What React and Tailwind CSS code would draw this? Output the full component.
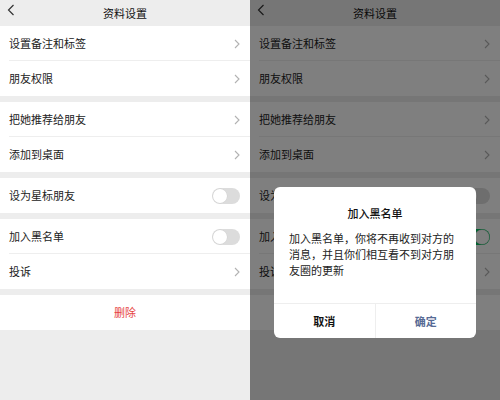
import React from 'react'

const font = { fontFamily: '"Noto Sans CJK SC", "Noto Sans", sans-serif' }

function Chevron() {
  return (
    <svg width="6" height="10" viewBox="0 0 6 10" className="shrink-0">
      <path d="M1 1l4 4-4 4" fill="none" stroke="#b2b2b2" strokeWidth="1.1" />
    </svg>
  )
}

function Toggle({ on }) {
  return (
    <div
      className={`w-[28px] h-[16px] rounded-full flex items-center p-[1px] ${
        on ? 'bg-[#07c160] justify-end' : 'bg-[#dcdcdc] justify-start'
      }`}
    >
      <div className="w-[14px] h-[14px] rounded-full bg-white shadow-[0_0_0_0.5px_#d0d0d0]" />
    </div>
  )
}

function Row({ label, right, divider }) {
  return (
    <div className="relative h-[35px] flex items-center justify-between pl-[9px] pr-[10px] bg-white">
      <span className="text-[11px] text-[#222]">{label}</span>
      {right}
      {divider && <div className="absolute left-[9px] right-0 bottom-0 h-px bg-[#eeeeee]" />}
    </div>
  )
}

function Screen({ blackOn }) {
  return (
    <div className="w-[250px] h-[400px] bg-[#ededed] flex flex-col">
      <div className="h-[26px] flex items-center relative">
        <svg width="8" height="12" viewBox="0 0 8 12" className="absolute left-[7px] top-[4px]">
          <path d="M6.5 1L1.5 6l5 5" fill="none" stroke="#333" strokeWidth="1.2" />
        </svg>
        <div className="flex-1 text-center text-[11px] text-[#111]">资料设置</div>
      </div>
      <div className="flex flex-col gap-[6px]">
        <div>
          <Row label="设置备注和标签" right={<Chevron />} divider />
          <Row label="朋友权限" right={<Chevron />} />
        </div>
        <div>
          <Row label="把她推荐给朋友" right={<Chevron />} divider />
          <Row label="添加到桌面" right={<Chevron />} />
        </div>
        <div>
          <Row label="设为星标朋友" right={<Toggle />} />
        </div>
        <div>
          <Row label="加入黑名单" right={<Toggle on={blackOn} />} divider />
          <Row label="投诉" right={<Chevron />} />
        </div>
        <div className="h-[35px] bg-white flex items-center justify-center text-[11px] text-[#e64340]">删除</div>
      </div>
    </div>
  )
}

export default function App() {
  return (
    <div className="w-[500px] h-[400px] flex overflow-hidden" style={font}>
      <Screen />
      <div className="relative w-[250px] h-[400px]">
        <Screen blackOn />
        <div className="absolute inset-0 bg-black/50" />
        <div className="absolute left-[24px] top-[187px] w-[202px] bg-white rounded-[6px] overflow-hidden">
          <div className="pt-[18px] text-center text-[11px] leading-[16px] font-medium text-[#111]">加入黑名单</div>
          <div className="px-[15px] pt-[9px] pb-[25px] text-[11px] leading-[16px] text-[#222]">
            加入黑名单，你将不再收到对方的消息，并且你们相互看不到对方朋友圈的更新
          </div>
          <div className="flex h-[35px] border-t border-[#eeeeee]">
            <div className="flex-1 flex items-center justify-center text-[11px] font-bold text-[#111] border-r border-[#eeeeee]">取消</div>
            <div className="flex-1 flex items-center justify-center text-[11px] font-bold text-[#576b95]">确定</div>
          </div>
        </div>
      </div>
    </div>
  )
}
